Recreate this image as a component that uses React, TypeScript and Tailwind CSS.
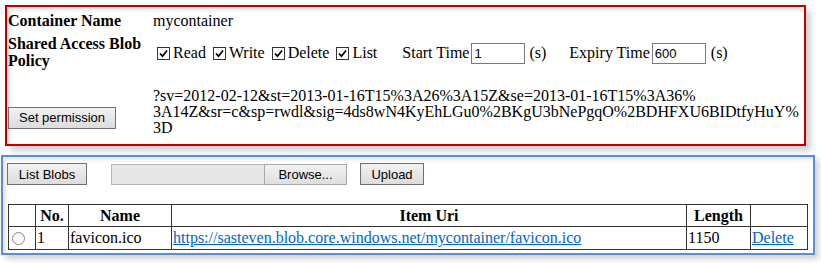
const Check = () => (
  <svg width="13" height="13" viewBox="0 0 13 13" className="shrink-0">
    <rect x="0.5" y="0.5" width="12" height="12" fill="#fff" stroke="#333" />
    <path d="M3 6.5 L5.5 9.2 L10 3.5" fill="none" stroke="#000" strokeWidth="1.8" />
  </svg>
);

const btn =
  "h-[22px] border border-[#707070] bg-gradient-to-b from-[#f2f2f2] to-[#dcdcdc] font-['Liberation_Sans',Arial,sans-serif] text-[13px] text-black leading-none";

const App = () => {
  const perms = ["Read", "Write", "Delete", "List"];

  return (
    <div className="w-[821px] h-[263px] bg-white font-['Liberation_Serif','Times_New_Roman',serif] text-[16px] text-black overflow-hidden">
      {/* permission panel */}
      <div className="ml-[5px] mt-[5px] w-[801px] h-[141px] border-2 border-[#c00000] shadow-[5px_5px_6px_rgba(0,0,0,0.18),inset_3px_3px_4px_rgba(0,0,0,0.12)] pl-[1px]">
        <div className="grid grid-cols-[145px_1fr]">
          <div className="font-bold leading-[18px] mt-[5px]">Container Name</div>
          <div className="leading-[18px] mt-[5px]">mycontainer</div>

          <div className="font-bold leading-[17px] mt-[5px]">
            Shared Access Blob
            <br />
            Policy
          </div>
          <div className="flex items-center mt-[5px] h-[36px]">
            {perms.map((p, i) => (
              <div key={p} className={`flex items-center ${i === 0 ? "ml-[4px]" : "ml-[7px]"}`}>
                <Check />
                <span className="ml-[3px]">{p}</span>
              </div>
            ))}
            <span className="ml-[25px]">Start Time</span>
            <input
              readOnly
              value="1"
              className="ml-[2px] w-[54px] h-[21px] border border-[#7a7a7a] px-[2px] font-['Liberation_Sans',Arial,sans-serif] text-[13px] outline-none"
            />
            <span className="ml-[4px]">(s)</span>
            <span className="ml-[23px]">Expiry Time</span>
            <input
              readOnly
              value="600"
              className="ml-[2px] w-[54px] h-[21px] border border-[#7a7a7a] px-[2px] font-['Liberation_Sans',Arial,sans-serif] text-[13px] outline-none"
            />
            <span className="ml-[5px]">(s)</span>
          </div>

          <div className="self-start mt-[34px]">
            <button className={`${btn} w-[108px]`}>Set permission</button>
          </div>
          <div className="leading-[16px] mt-[17px]">
            <div>?sv=2012-02-12&amp;st=2013-01-16T15%3A26%3A15Z&amp;se=2013-01-16T15%3A36%</div>
            <div>3A14Z&amp;sr=c&amp;sp=rwdl&amp;sig=4ds8wN4KyEhLGu0%2BKgU3bNePgqO%2BDHFXU6BIDtfyHuY%</div>
            <div>3D</div>
          </div>
        </div>
      </div>

      {/* blob list panel */}
      <div className="ml-[1px] mt-[9px] w-[814px] h-[100px] border-2 border-[#5b8ed6] shadow-[4px_4px_6px_rgba(0,0,0,0.18),inset_3px_3px_4px_rgba(0,0,0,0.1)] pl-[4px] pt-[6px]">
        <div className="flex items-center">
          <button className={`${btn} w-[80px]`}>List Blobs</button>
          <div className="ml-[24px] flex h-[21px]">
            <div className="w-[153px] h-full bg-[#e6e6e6] border border-[#b5b5b5] border-r-0" />
            <button className="w-[83px] h-full border border-[#a8a8a8] bg-gradient-to-b from-[#f2f2f2] to-[#dedede] font-['Liberation_Sans',Arial,sans-serif] text-[13px] leading-none">
              Browse...
            </button>
          </div>
          <button className={`${btn} w-[64px] ml-[13px]`}>Upload</button>
        </div>

        <table className="mt-[19px] ml-[1px] w-[799px] table-fixed border-collapse border border-[#333]">
          <colgroup>
            <col className="w-[27px]" />
            <col className="w-[33px]" />
            <col className="w-[103px]" />
            <col className="w-[515px]" />
            <col className="w-[64px]" />
            <col className="w-[57px]" />
          </colgroup>
          <thead>
            <tr className="h-[22px] font-bold leading-[18px]">
              <th className="border border-[#333]" />
              <th className="border border-[#333] text-center">No.</th>
              <th className="border border-[#333] text-center">Name</th>
              <th className="border border-[#333] text-center">Item Uri</th>
              <th className="border border-[#333] text-center">Length</th>
              <th className="border border-[#333]" />
            </tr>
          </thead>
          <tbody>
            <tr className="h-[23px] leading-[18px]">
              <td className="border border-[#333] pl-[3px]">
                <span className="block w-[13px] h-[13px] rounded-full border border-[#8a8a8a] bg-gradient-to-b from-[#f4f4f4] to-white" />
              </td>
              <td className="border border-[#333] pl-[1px]">1</td>
              <td className="border border-[#333] pl-[1px]">favicon.ico</td>
              <td className="border border-[#333] pl-[1px]">
                <a href="#" className="text-[#0066cc] underline">
                  https://sasteven.blob.core.windows.net/mycontainer/favicon.ico
                </a>
              </td>
              <td className="border border-[#333] pl-[1px]">1150</td>
              <td className="border border-[#333] pl-[1px]">
                <a href="#" className="text-[#0066cc] underline">
                  Delete
                </a>
              </td>
            </tr>
          </tbody>
        </table>
      </div>
    </div>
  );
};

export default App;
